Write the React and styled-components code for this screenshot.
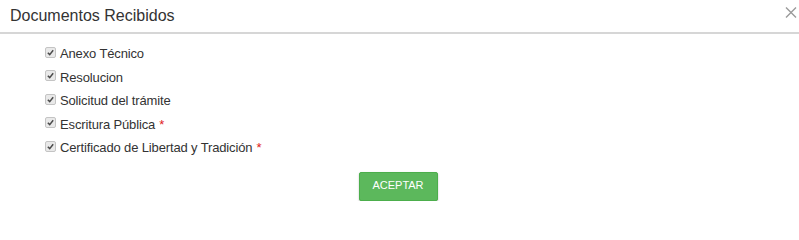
import React, { useState } from 'react'
import styled, { createGlobalStyle } from 'styled-components'

const GlobalStyle = createGlobalStyle`
  body {
    margin: 0;
    background: #ffffff;
    font-family: 'Liberation Sans', Arial, sans-serif;
    color: #333333;
  }
`

const Modal = styled.div`
  width: 799px;
  display: flex;
  flex-direction: column;
`

const Header = styled.div`
  display: flex;
  justify-content: space-between;
  align-items: flex-start;
  height: 34px;
  padding: 5px 2px 0 10px;
  box-sizing: border-box;
  border-bottom: 2px solid #d6d6d6; /* light gray */
`

const Title = styled.h4`
  margin: 0;
  font-size: 16px;
  font-weight: 400;
  line-height: 22px;
  color: #333333;
`

const CloseButton = styled.button`
  border: 0;
  background: transparent;
  padding: 0;
  margin-top: 2px;
  width: 12px;
  height: 11px;
  cursor: pointer;
  display: flex;
`

const List = styled.div`
  display: flex;
  flex-direction: column;
  padding: 8px 0 0 45px;
`

const Row = styled.label`
  display: flex;
  align-items: center;
  height: 23.5px;
  font-size: 13px;
  letter-spacing: -0.14px;
  line-height: 23.5px;
  color: #333333;
`

const Box = styled.span`
  width: 9px;
  height: 9px;
  margin: 0 4px 3px 0;
  border: 1px solid #c4c4c4;
  border-radius: 2px;
  background: #e9e9e9;
  display: flex;
  align-items: center;
  justify-content: center;
`

const Required = styled.span`
  color: #e02020; /* red */
  margin-left: 4px;
`

const Footer = styled.div`
  display: flex;
  justify-content: center;
  padding: 12px 3px 0 0;
`

const Button = styled.button`
  width: 79px;
  height: 29px;
  background: #5cb85c; /* green */
  border: 1px solid #4cae4c;
  border-radius: 2px;
  box-shadow: 0 1px 2px rgba(0, 0, 0, 0.25);
  color: #ffffff;
  font-family: 'Liberation Sans', Arial, sans-serif;
  font-size: 11px;
  padding: 0 0 2px 0;
  cursor: pointer;
`

const documents = [
  { id: 1, text: 'Anexo Técnico' },
  { id: 2, text: 'Resolucion' },
  { id: 3, text: 'Solicitud del trámite' },
  { id: 4, text: 'Escritura Pública', required: true },
  { id: 5, text: 'Certificado de Libertad y Tradición', required: true },
]

const Check = () => (
  <svg width="7" height="7" viewBox="0 0 7 7">
    <path d="M0.8 3.8 L2.7 5.6 L6.2 1.2" fill="none" stroke="#4a4a4a" strokeWidth="1.5" />
  </svg>
)

const App = () => {
  const [open, setOpen] = useState(true)

  return (
    <>
      <GlobalStyle />
      <Modal style={{ opacity: open ? 1 : 0.5 }}>
        <Header>
          <Title>Documentos Recibidos</Title>
          <CloseButton aria-label="Cerrar" onClick={() => setOpen(!open)}>
            <svg width="12" height="11" viewBox="0 0 12 11">
              <path d="M1 0.5 L11 10.5 M11 0.5 L1 10.5" stroke="#9a9a9a" strokeWidth="1.4" />
            </svg>
          </CloseButton>
        </Header>
        <List>
          {documents.map((doc) => (
            <Row key={doc.id}>
              <Box><Check /></Box>
              {doc.text}
              {doc.required && <Required>*</Required>}
            </Row>
          ))}
        </List>
        <Footer>
          <Button type="button">ACEPTAR</Button>
        </Footer>
      </Modal>
    </>
  )
}

export default App
